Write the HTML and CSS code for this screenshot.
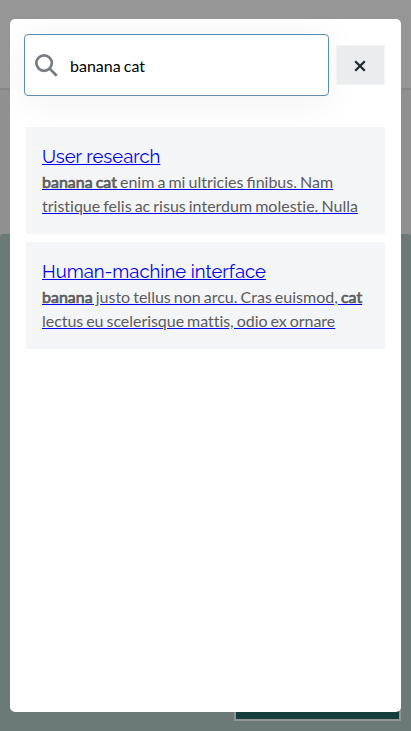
FILE: index.html
```html
<!DOCTYPE html>
<html lang="en">
<head>
<meta charset="utf-8">
<title>Search</title>
<link rel="stylesheet" href="styles.css">
</head>
<body>
<div class="page">
  <div class="topbar"></div>
  <div class="banner"></div>
  <div class="hero"><div class="cta"></div></div>
</div>
<main class="modal">
  <div class="search-row">
    <label class="search-box">
      <svg class="search-icon" viewBox="0 0 22 22" fill="none" stroke="#787b86" stroke-width="2.6"><circle cx="8.7" cy="8.7" r="7.4"/><path d="M14 14l6.8 6.8"/></svg>
      <input class="search-input" type="text" value="banana cat">
    </label>
    <button class="close" aria-label="Close"><svg class="close-icon" viewBox="0 0 12 12" fill="none" stroke="#1f2937" stroke-width="2.3"><path d="M1.2 1.2l9.6 9.6M10.8 1.2l-9.6 9.6"/></svg></button>
  </div>
  <div class="results">
    <a class="result" href="#">
      <span class="title">User research</span>
      <span class="excerpt"><span><mark>banana cat</mark> enim a mi ultricies <span class="lig">fi</span>nibus. Nam<br>tristique felis ac risus interdum molestie. Nulla</span></span>
    </a>
    <a class="result" href="#">
      <span class="title">Human-machine interface</span>
      <span class="excerpt"><span><mark>banana</mark> justo tellus non arcu. Cras euismod, <mark>cat</mark><br><span class="tight">lectus eu scelerisque mattis, odio ex ornare</span></span></span>
    </a>
  </div>
</main>
</body>
</html>
```
FILE: styles.css
```css
* { box-sizing: border-box; }
body { margin: 0; height: 731px; overflow: hidden; font-family: Lato, sans-serif; }
.page { height: 731px; display: flex; flex-direction: column; background: #909090; }
.topbar { height: 90px; background: #969696; border-bottom: 2px solid #868686; }
.banner { height: 144px; }
.hero {
  flex: 1; display: flex; align-items: flex-end; justify-content: flex-end;
  padding: 10px; background: #6b7977; border-radius: 3px 3px 0 0;
}
.cta { width: 167px; height: 44px; border: 2px solid #939393; background: #143e3b; }
.modal {
  position: absolute; left: 10px; top: 19px; width: 391px; height: 693px;
  overflow: hidden; background: #fff; border-radius: 5px;
}
.search-row { display: flex; align-items: center; gap: 7px; padding: 15px 16px 0 14px; }
.search-box {
  display: flex; align-items: center; gap: 12px; width: 305px; height: 62px;
  padding-left: 10px; border: 1px solid #5b8fb5; border-radius: 4px; background: #fff;
  box-shadow: 0 5px 40px rgba(0, 0, 0, .06);
}
.search-icon { width: 23px; height: 23px; }
.search-input {
  width: 240px; padding: 2px 0 0; border: 0; outline: 0; background: none;
  font: 16px/24px Lato, sans-serif; word-spacing: -1px; color: #000;
}
.close {
  display: flex; align-items: center; justify-content: center;
  width: 49px; height: 40px; padding: 2px 1px 0 0; border: 1px solid #f3f4f4; background: #eaecee;
}
.close-icon { width: 12px; height: 12px; }
.results { position: relative; display: grid; gap: 8px; padding: 31px 16px 0; }
.result { display: block; height: 107px; padding: 18px 16px; background: #f4f5f7; color: #00e; }
.title { display: block; font: 400 18.5px/24px Raleway, Lato, sans-serif; }
.excerpt {
  display: block; font-size: 16px; line-height: 24px; margin-top: 1px; white-space: nowrap;
  word-spacing: -1.05px; font-variant-ligatures: none;
}
.excerpt > span { color: #5c5c5c; }
.lig { font-variant-ligatures: normal; letter-spacing: 0; }
.tight { letter-spacing: -.04px; }
mark { background: none; color: inherit; -webkit-text-stroke: .7px #5c5c5c; }
```
